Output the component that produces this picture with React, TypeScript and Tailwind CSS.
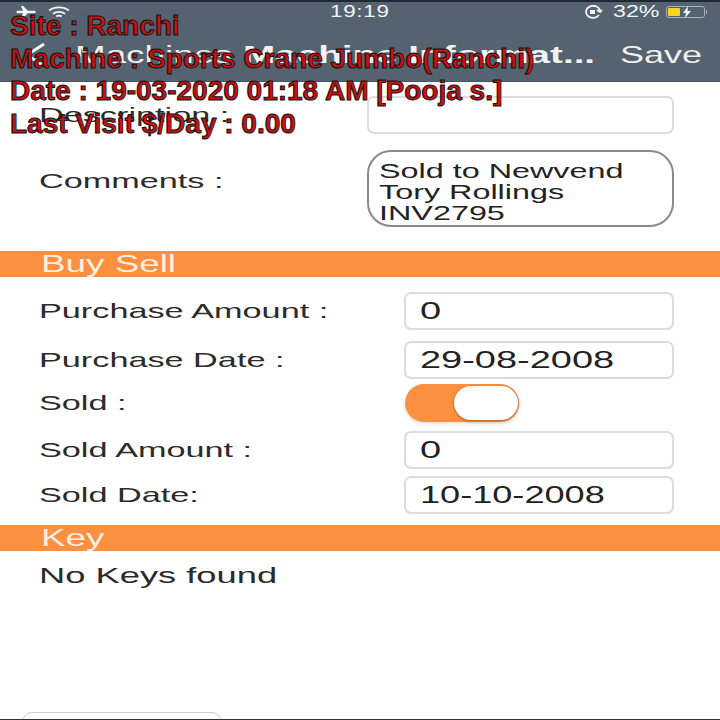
import React from 'react';

const Stretch = ({ children, className = 'scale-x-[1.63]' }: { children: React.ReactNode; className?: string }) => (
  <span className={`inline-block origin-left whitespace-nowrap ${className}`}>{children}</span>
);

function Field({ label, value, mb, valueScale = 'scale-x-[1.65]' }: { label: string; value: string; mb: string; valueScale?: string }) {
  return (
    <div className={`flex items-center h-[38px] ${mb}`}>
      <div className="w-[404px] pl-[39px] text-[21px] text-[#2b2b2b]">
        <Stretch>{label}</Stretch>
      </div>
      <div className="w-[270px] h-full flex items-center pl-[14px] border-2 border-[#dcdcdc] rounded-[7px] text-[23px] text-[#222]">
        <Stretch className={valueScale}>{value}</Stretch>
      </div>
    </div>
  );
}

function SectionBar({ title }: { title: string }) {
  return (
    <div className="h-[26px] bg-[#fb9040] pl-[41px] flex items-center text-[23px] leading-none text-[#fdeee0]">
      <Stretch className="scale-x-[1.6]">{title}</Stretch>
    </div>
  );
}

function StatusBar() {
  return (
    <div className="relative h-[30px] pb-[10px] flex items-center text-[#f2f4f5]">
      <svg width="23" height="12" viewBox="0 0 24 14" className="ml-[15px] shrink-0" fill="#f2f4f5">
        <path d="M1 5.500h7L5.500 0H8l5.500 5.500H20c2 0 3 .8 3 1.500s-1 1.500-3 1.500h-6.500L8 14H5.500L8 8.500H1L0 7z" />
      </svg>
      <svg width="28" height="13" viewBox="0 0 28 17" className="ml-[7px] shrink-0" fill="none" stroke="#f2f4f5" strokeWidth="2.400">
        <path d="M1 6c7-5.500 19-5.500 26 0M6 10c4.500-3 11.500-3 16 0M10.500 13.500c2-1 5-1 7 0" />
      </svg>
      <span className="absolute left-[330px] top-0 text-[16px] leading-[20px] tracking-[0.5px]">
        <span className="inline-block origin-left scale-x-[1.4]">19:19</span>
      </span>
      <div className="ml-auto mr-[13px] flex items-center">
        <svg width="20" height="14" viewBox="0 0 20 14" fill="none" stroke="#f2f4f5" strokeWidth="1.800">
          <path d="M16 10a7 6 0 1 1 1-4" />
          <path d="M14 5l3 2 2-2" />
          <rect x="7" y="5" width="5" height="4" fill="#f2f4f5" stroke="none" />
        </svg>
        <span className="ml-[10px] w-[53px] text-[16px] leading-none">
          <span className="inline-block origin-left scale-x-[1.45]">32%</span>
        </span>
        <div className="flex items-center">
          <div className="relative w-[39px] h-[12px] border border-[#aab1b8] rounded-[3px] p-[1px]">
            <div className="w-[12px] h-full bg-[#f8d31f] rounded-[1px]" />
            <svg width="10" height="12" viewBox="0 0 10 12" fill="#f2f4f5" className="absolute left-[15px] top-[-1px]">
              <path d="M6 0L1 7h3l-1 5 6-7H5.500z" />
            </svg>
          </div>
          <div className="w-[1px] h-[4px] bg-[#aab1b8] ml-[1px]" />
        </div>
      </div>
    </div>
  );
}

export default function App() {
  return (
    <div className="relative w-[720px] h-[720px] overflow-hidden bg-white font-['Liberation_Sans',Arial,sans-serif]">
      <header className="h-[82px] bg-[#55626f] border-t-2 border-t-[#1d2a36] border-b border-b-[#48545f]">
        <StatusBar />
        <div className="flex items-center h-[46px] text-white">
          <svg width="22" height="26" viewBox="0 0 22 26" fill="none" stroke="#f4f5f6" strokeWidth="3" className="ml-[24px] shrink-0">
            <path d="M20 2L3 13l17 11" />
          </svg>
          <div className="ml-[29px] w-[168px] text-[23px] text-[#eef0f1]">
            <Stretch className="scale-x-[1.6]">Machines</Stretch>
          </div>
          <div className="w-[377px] text-[23px] font-bold text-[#f0f2f3]">
            <Stretch className="scale-x-[1.68]">Machine Informat...</Stretch>
          </div>
          <div className="w-[81px] text-[24px] text-[#eef0f1]">
            <Stretch className="scale-x-[1.5]">Save</Stretch>
          </div>
        </div>
      </header>

      <main className="pt-[14px]">
        <div className="flex items-center h-[38px] mb-[16px]">
          <div className="w-[367px] pl-[39px] text-[21px] text-[#2b2b2b]">
            <Stretch>Description :</Stretch>
          </div>
          <div className="w-[307px] h-full border-2 border-[#dcdcdc] rounded-[7px]" />
        </div>

        <div className="flex items-center h-[77px] mb-[24px]">
          <div className="w-[367px] pl-[39px] text-[21px] text-[#2b2b2b] pb-[15px]">
            <Stretch>Comments :</Stretch>
          </div>
          <div className="w-[307px] h-full border-2 border-[#8a8a8a] rounded-[24px] pl-[10px] pt-[8px] text-[21px] leading-[21px] text-[#222]">
            <div><Stretch className="scale-x-[1.54]">Sold to Newvend</Stretch></div>
            <div><Stretch className="scale-x-[1.54]">Tory Rollings</Stretch></div>
            <div><Stretch className="scale-x-[1.54]">INV2795</Stretch></div>
          </div>
        </div>

        <SectionBar title="Buy Sell" />

        <div className="pt-[15px]">
          <Field label="Purchase Amount :" value="0" mb="mb-[11px]" />
          <Field label="Purchase Date :" value="29-08-2008" mb="mb-[5px]" />

          <div className="flex items-center h-[38px] mb-[9px]">
            <div className="w-[405px] pl-[39px] text-[21px] text-[#2b2b2b]">
              <Stretch>Sold :</Stretch>
            </div>
            <div className="w-[114px] h-full bg-[#fb9040] rounded-full flex items-center justify-end pr-[1px] shadow-[0_2px_4px_rgba(0,0,0,0.12)]">
              <div className="w-[64px] h-[34px] bg-white rounded-full shadow-[0_1px_3px_rgba(150,80,20,0.8)]" />
            </div>
          </div>

          <Field label="Sold Amount :" value="0" mb="mb-[7px]" />
          <Field label="Sold Date:" value="10-10-2008" mb="mb-[11px]" valueScale="scale-x-[1.57]" />
        </div>

        <SectionBar title="Key" />

        <div className="pl-[39px] pt-[8px] text-[22px] text-[#2b2b2b]">
          <Stretch className="scale-x-[1.65]">No Keys found</Stretch>
        </div>
      </main>

      <div className="absolute left-[22px] top-[712px] w-[200px] h-[20px] border border-[#cfcfcf] rounded-[12px] bg-white" />
      <div className="absolute left-0 bottom-0 w-full h-[1px] bg-[#333]" />

      <div className="absolute left-[10px] top-[10px] text-[28px] leading-[32.500px] font-bold text-[#cc0f0f] [-webkit-text-stroke:1px_#111] whitespace-nowrap">
        <div>Site : Ranchi</div>
        <div>Machine : Sports Crane Jumbo(Ranchi)</div>
        <div>Date : 19-03-2020 01:18 AM [Pooja s.]</div>
        <div>Last Visit $/Day : 0.00</div>
      </div>
    </div>
  );
}
